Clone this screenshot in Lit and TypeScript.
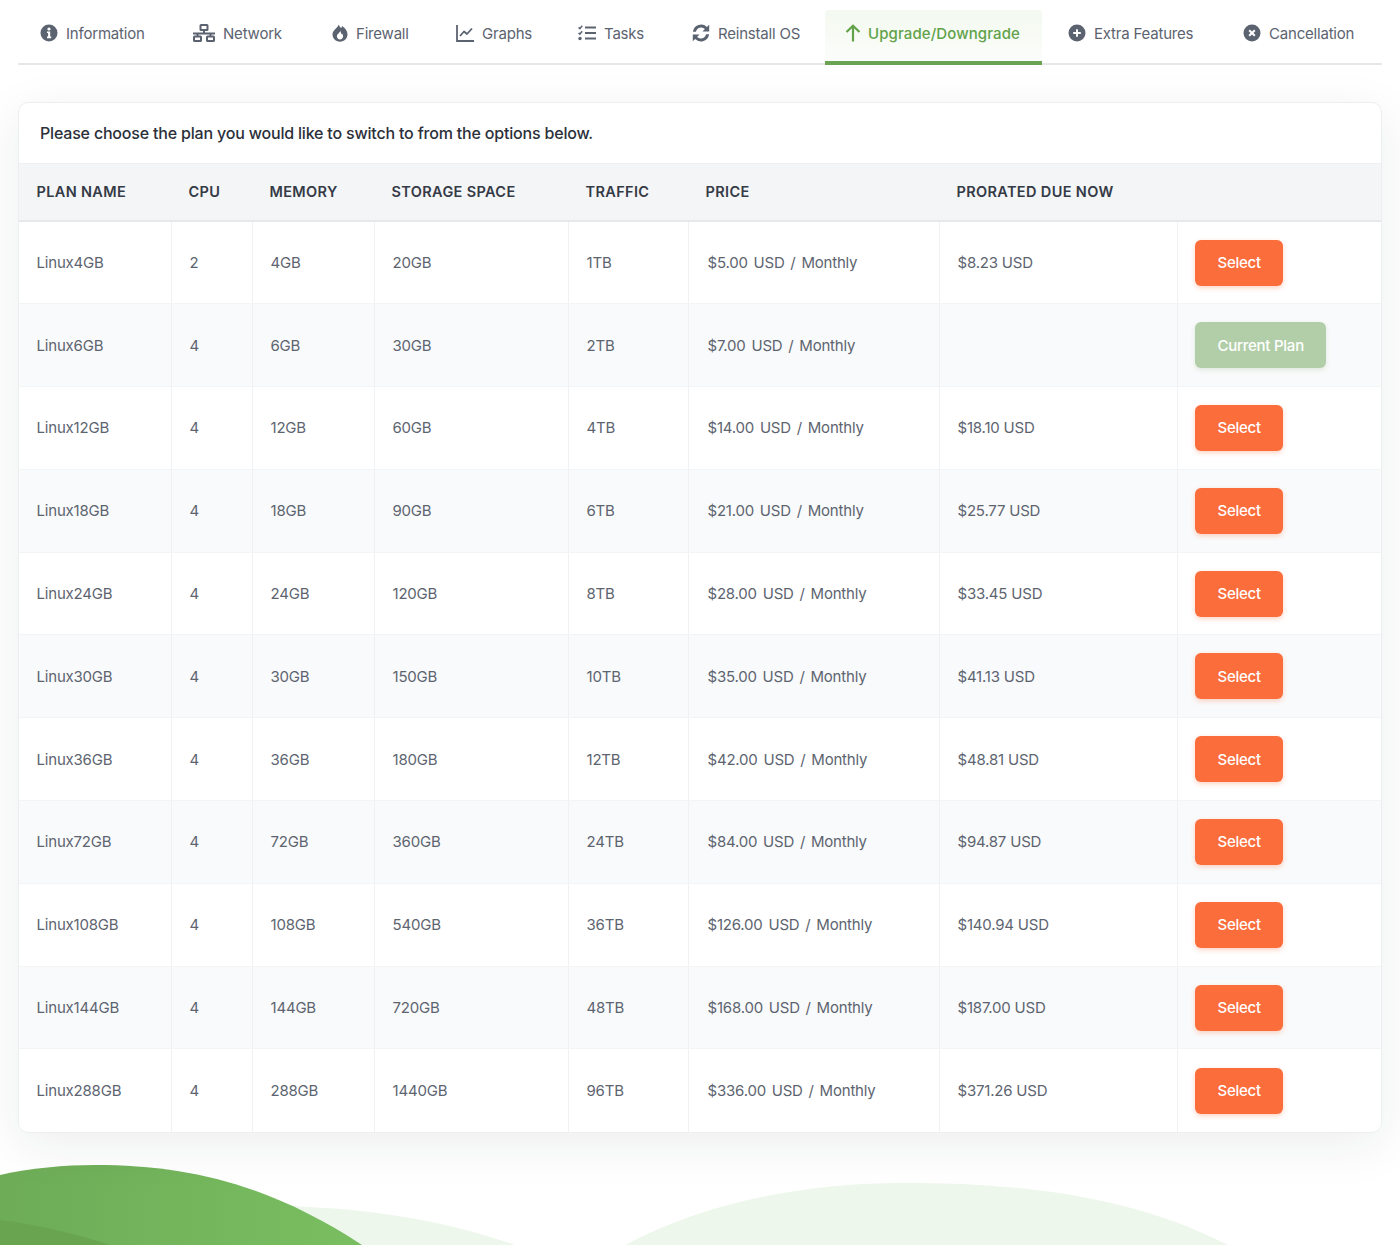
import { LitElement, html, css, svg } from "lit";
import { customElement } from "lit/decorators.js";

const icons: Record<string, unknown> = {
  info: svg`<svg viewBox="0 0 18 18" width="18" height="18"><circle cx="9" cy="9" r="8.5" fill="currentColor"/><circle cx="9" cy="5" r="1.6" fill="#fff"/><path d="M7 7.500h3.200v5.100h1v1.600H7v-1.600h1.100V9.100H7z" fill="#fff"/></svg>`,
  network: svg`<svg viewBox="0 0 22 18" width="22" height="18" fill="none" stroke="currentColor" stroke-width="2"><rect x="7.500" y="1" width="7" height="5" rx=".6"/><path d="M11 6v3.500M0 9.500h22M4.500 9.500v3M17.500 9.500v3"/><rect x="1" y="12.500" width="7" height="4.500" rx=".6"/><rect x="14" y="12.500" width="7" height="4.500" rx=".6"/></svg>`,
  fire: svg`<svg viewBox="0 0 16 18" width="16" height="18"><path fill="currentColor" fill-rule="evenodd" d="M6.800.4c.5 1.800 1.400 2.700 2.500 3.700.4-.6.700-1.300.8-2C13.300 4.200 15.500 7.300 15.500 10.300c0 4.200-3.300 7.400-7.500 7.400S.5 14.500.5 10.300C.5 6.400 5.100 4.400 6.800.4zM8.500 6.700C8 8.600 4.900 10 4.900 12.300c0 1.900 1.400 3.200 3.100 3.200s3.100-1.300 3.100-3.200c0-1.200-.5-2.300-1.200-3.100-.2.500-.5.900-.9 1.100 0-1.200-.1-2.500-.5-3.600z"/></svg>`,
  graph: svg`<svg viewBox="0 0 18 18" width="18" height="18" fill="none" stroke="currentColor" stroke-width="1.800"><path d="M1 1v16h17"/><path d="M4 12l4-4.500 3 2.500 5-5.500" stroke-linejoin="round"/></svg>`,
  tasks: svg`<svg viewBox="0 0 18 16" width="18" height="16" fill="none" stroke="currentColor" stroke-width="2"><path d="M7 2.500h11M7 8h11M7 13.500h11"/><path d="M.6 2.400l1.300 1.300L4.200.8M.6 7.900l1.300 1.300 2.300-2.900" stroke-width="1.500"/><circle cx="2" cy="13.500" r="1.700" fill="currentColor" stroke="none"/></svg>`,
  sync: svg`<svg viewBox="0 0 18 18" width="18" height="18"><path fill="currentColor" d="M14.900 3A8.300 8.300 0 0 0 .9 7.800h3a5.500 5.500 0 0 1 9-2.900L10.500 7.400H17.200V.7zM3.100 15A8.300 8.300 0 0 0 17.100 10.200h-3a5.500 5.500 0 0 1-9 2.900l2.400-2.500H.8v6.700z"/></svg>`,
  up: svg`<svg viewBox="0 0 16 18" width="16" height="18" fill="none" stroke="currentColor" stroke-width="2.200"><path d="M8 17.500V2M1.500 8L8 1.700 14.500 8"/></svg>`,
  plus: svg`<svg viewBox="0 0 18 18" width="18" height="18"><circle cx="9" cy="9" r="8.500" fill="currentColor"/><path d="M9 5.200v7.600M5.200 9h7.600" stroke="#fff" stroke-width="1.900"/></svg>`,
  times: svg`<svg viewBox="0 0 18 18" width="18" height="18"><circle cx="9" cy="9" r="8.500" fill="currentColor"/><path d="M6.200 6.200l5.600 5.600M11.800 6.200l-5.600 5.600" stroke="#fff" stroke-width="2"/></svg>`,
};

const tabs = [
  { icon: "info", label: "Information" },
  { icon: "network", label: "Network" },
  { icon: "fire", label: "Firewall" },
  { icon: "graph", label: "Graphs" },
  { icon: "tasks", label: "Tasks" },
  { icon: "sync", label: "Reinstall OS" },
  { icon: "up", label: "Upgrade/Downgrade", active: true },
  { icon: "plus", label: "Extra Features" },
  { icon: "times", label: "Cancellation" },
];

const plans = [
  ["Linux4GB", "2", "4GB", "20GB", "1TB", "$5.00 USD / Monthly", "$8.23 USD"],
  ["Linux6GB", "4", "6GB", "30GB", "2TB", "$7.00 USD / Monthly", ""],
  ["Linux12GB", "4", "12GB", "60GB", "4TB", "$14.00 USD / Monthly", "$18.10 USD"],
  ["Linux18GB", "4", "18GB", "90GB", "6TB", "$21.00 USD / Monthly", "$25.77 USD"],
  ["Linux24GB", "4", "24GB", "120GB", "8TB", "$28.00 USD / Monthly", "$33.45 USD"],
  ["Linux30GB", "4", "30GB", "150GB", "10TB", "$35.00 USD / Monthly", "$41.13 USD"],
  ["Linux36GB", "4", "36GB", "180GB", "12TB", "$42.00 USD / Monthly", "$48.81 USD"],
  ["Linux72GB", "4", "72GB", "360GB", "24TB", "$84.00 USD / Monthly", "$94.87 USD"],
  ["Linux108GB", "4", "108GB", "540GB", "36TB", "$126.00 USD / Monthly", "$140.94 USD"],
  ["Linux144GB", "4", "144GB", "720GB", "48TB", "$168.00 USD / Monthly", "$187.00 USD"],
  ["Linux288GB", "4", "288GB", "1440GB", "96TB", "$336.00 USD / Monthly", "$371.26 USD"],
];

const headers = ["Plan Name", "CPU", "Memory", "Storage Space", "Traffic", "Price", "Prorated Due Now", ""];
const widths = [152, 81, 122, 194, 120, 251, 238, 204];

@customElement("app-root")
export class AppRoot extends LitElement {
  static styles = css`
    :host {
      display: block;
      position: relative;
      height: 1255px;
      overflow: hidden;
      background: #fff;
      font-family: Inter, "Liberation Sans", sans-serif;
      color: #5d6470;
    }

    .page {
      position: relative;
      padding: 10px 18px 0;
    }

    .tabs {
      display: grid;
      grid-template-columns: 153px 139px 124px 122px 114px 155px 221px 175px 1fr;
      height: 55px;
      border-bottom: 2px solid #e6e7e8;
      box-sizing: border-box;
      margin-bottom: 37px;
    }

    .tab {
      display: flex;
      align-items: center;
      gap: 8px;
      padding: 0 0 9px 22px;
      height: 55px;
      box-sizing: border-box;
      font-size: 15px;
      letter-spacing: -0.2px;
      color: #5c6370;
      white-space: nowrap;
    }

    .tab svg {
      display: block;
      flex: none;
    }

    .tab.active {
      width: 217px;
      color: #62a24a;
      background: linear-gradient(#f3f9f0, #fbfdfa);
      border-bottom: 4px solid #6aa351;
      border-radius: 4px 4px 0 0;
      padding: 0 0 5px 20px;
      gap: 7px;
      font-weight: 500;
      letter-spacing: 0.1px;
    }

    .card {
      background: #fff;
      border: 1px solid #eceef0;
      border-radius: 10px;
      box-shadow: 0 12px 50px rgba(30, 35, 45, 0.08);
      overflow: hidden;
    }

    .intro {
      height: 60px;
      display: flex;
      align-items: center;
      padding-left: 21px;
      font-size: 16px;
      font-weight: 500;
      letter-spacing: -0.19px;
      color: #2b303a;
    }

    table {
      width: 100%;
      border-collapse: collapse;
      table-layout: fixed;
    }

    th {
      height: 57.5px;
      box-sizing: border-box;
      padding: 0 0 1px 17.5px;
      background: #f4f5f6;
      border-top: 1px solid #eef0f2;
      border-bottom: 2px solid #e6e8ea;
      text-align: left;
      text-transform: uppercase;
      font-size: 14.5px;
      font-weight: 600;
      letter-spacing: 0.35px;
      color: #343a46;
    }

    td {
      height: 82.8px;
      box-sizing: border-box;
      padding: 0 0 0 18px;
      font-size: 15px;
      letter-spacing: -0.2px;
      color: #5d6470;
      border-left: 1px solid #f0f1f3;
      border-bottom: 1px solid #f3f4f5;
    }

    td:first-child {
      border-left: 0;
      padding-left: 17.5px;
    }

    td:nth-child(6) {
      padding-left: 19px;
      word-spacing: 1.8px;
    }

    td:last-child {
      padding-left: 17.5px;
    }

    tr:last-child td {
      border-bottom: 0;
    }

    tr:nth-child(even) td {
      background: #f9fafb;
    }

    .btn {
      display: inline-flex;
      align-items: center;
      height: 46px;
      padding: 0 22.5px;
      border-radius: 6px;
      font-size: 15px;
      font-weight: 500;
      letter-spacing: -0.25px;
      color: #fff;
      background: #fb6d3b;
      box-shadow: 0 2px 5px rgba(251, 109, 59, 0.3);
      vertical-align: middle;
    }

    .btn.current {
      background: #b1cea8;
      box-shadow: 0 2px 5px rgba(120, 160, 110, 0.2);
    }

    .waves {
      position: absolute;
      left: 0;
      top: 1155px;
      display: block;
    }
  `;

  render() {
    return html`
      <svg class="waves" width="1400" height="100" viewBox="0 1155 1400 100">
        <defs>
          <linearGradient id="g" x1="0" y1="1200" x2="362" y2="1200" gradientUnits="userSpaceOnUse">
            <stop offset="0" stop-color="#6eac58" />
            <stop offset="1" stop-color="#79be60" />
          </linearGradient>
        </defs>
        <path fill="#eef7ec" d="M200 1245V1207C330 1201 430 1215 515 1245Z" />
        <path fill="#eef7ec" d="M625 1245C710 1200 810 1183 905 1183C1020 1183 1130 1195 1228 1245Z" />
        <path fill="url(#g)" d="M0 1175C30 1168 65 1165 95 1165C190 1165 270 1185 362 1245H0Z" />
        <path fill="#69a551" d="M0 1220C40 1225 80 1235 110 1245H0Z" />
      </svg>
      <div class="page">
        <nav class="tabs">
          ${tabs.map(
            (t) => html`<div class="tab ${t.active ? "active" : ""}">${icons[t.icon]}<span>${t.label}</span></div>`,
          )}
        </nav>
        <div class="card">
          <div class="intro">Please choose the plan you would like to switch to from the options below.</div>
          <table>
            <colgroup>${widths.map((w) => html`<col style="width:${w}px" />`)}</colgroup>
            <thead>
              <tr>${headers.map((h) => html`<th>${h}</th>`)}</tr>
            </thead>
            <tbody>
              ${plans.map(
                (p) => html`<tr>
                  ${p.map((c) => html`<td>${c}</td>`)}
                  <td>
                    ${p[6]
                      ? html`<span class="btn">Select</span>`
                      : html`<span class="btn current">Current Plan</span>`}
                  </td>
                </tr>`,
              )}
            </tbody>
          </table>
        </div>
      </div>
    `;
  }
}
